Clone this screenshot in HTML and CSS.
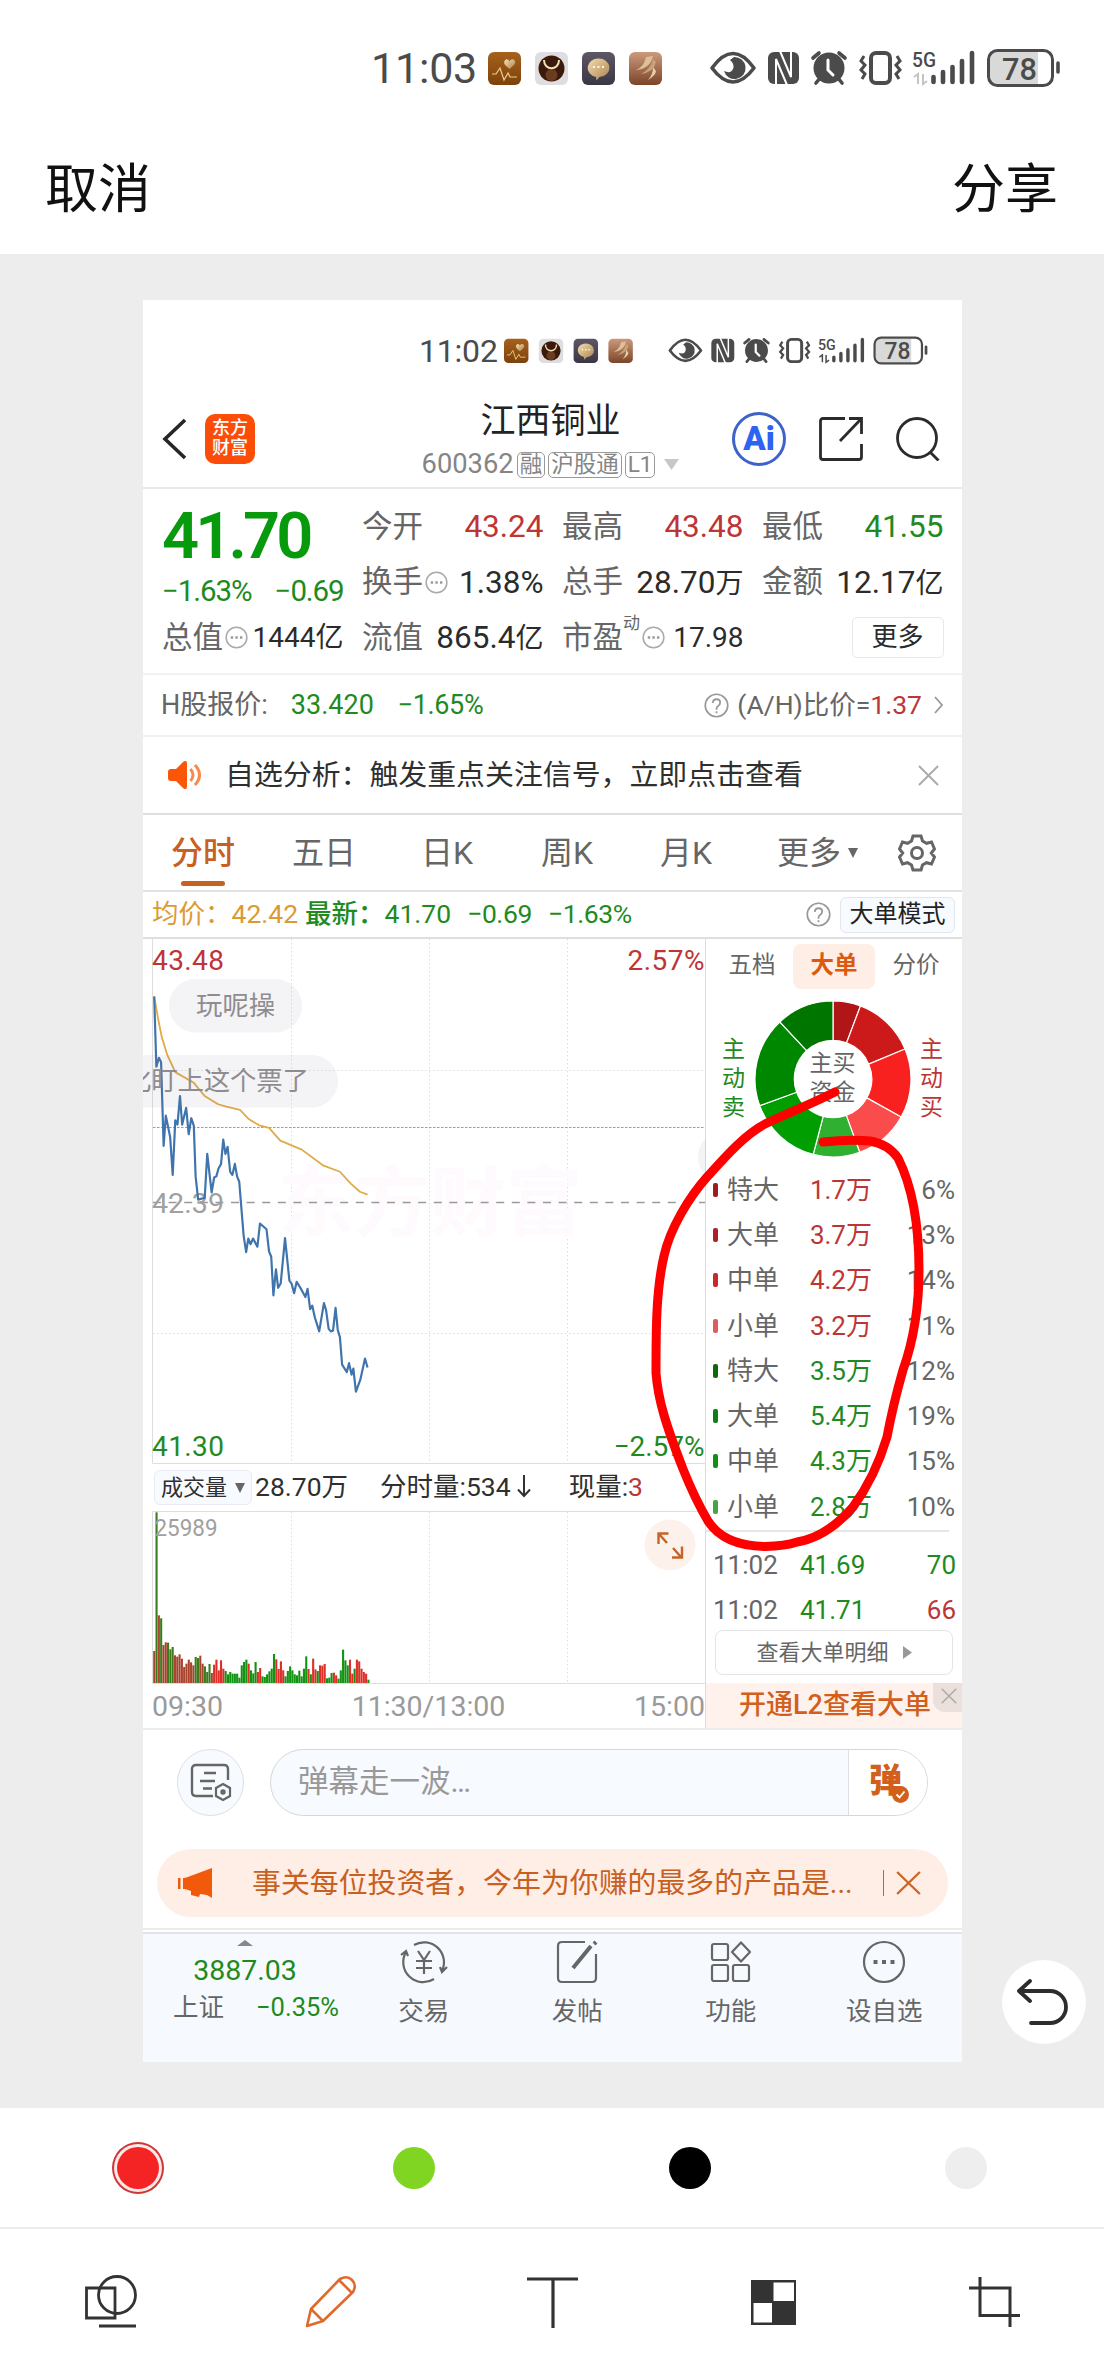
FILE: index.html
```html
<!DOCTYPE html>
<html lang="zh-CN">
<head>
<meta charset="utf-8">
<title>江西铜业</title>
<link rel="stylesheet" href="styles.css">
</head>
<body>
<svg class="defs" width="0" height="0">
  <defs>
    <linearGradient id="gBrown" x1="0" y1="0" x2="0" y2="1"><stop offset="0" stop-color="#a7611b"/><stop offset="1" stop-color="#7c420c"/></linearGradient>
    <linearGradient id="gSlate" x1="0" y1="0" x2="0" y2="1"><stop offset="0" stop-color="#5d5666"/><stop offset="1" stop-color="#3a3745"/></linearGradient>
    <linearGradient id="gRose" x1="0" y1="0" x2="0" y2="1"><stop offset="0" stop-color="#cb9a7c"/><stop offset="1" stop-color="#7b4428"/></linearGradient>
    <linearGradient id="gGold" x1="0" y1="0" x2="1" y2="1"><stop offset="0" stop-color="#f4ddb0"/><stop offset="1" stop-color="#a98150"/></linearGradient>
    <symbol id="status-icons" viewBox="488 46 574 44">
      <rect x="488" y="52" width="33" height="33" rx="6" fill="url(#gBrown)"/>
      <path d="M492 74h4l4-6 4 12 4-7 2 4h7" fill="none" stroke="#f0cf8e" stroke-width="1.200"/>
      <path d="M509.500 69c-5-4-6-5.500-5-8 1.500-2.500 4-2 5 .5 1-2.500 4-3 5.500-.5 1 2.500-.5 4-5.500 8z" fill="url(#gGold)"/>
      <rect x="535" y="52" width="33" height="33" rx="6" fill="#dfdde0"/>
      <circle cx="551.500" cy="68.500" r="13" fill="#3b1a0c"/><circle cx="551.500" cy="75" r="6" fill="#6a3c20"/>
      <path d="M544 60c0 11 15 11 15 0" fill="none" stroke="#f2dfb4" stroke-width="2"/>
      <rect x="582" y="52" width="33" height="33" rx="6" fill="url(#gSlate)"/>
      <path d="M598.500 58.500a10.500 9.300 0 0 1 1 18.600l-3 3.400-.5-3.600a10.500 9.300 0 0 1 2.500-18.400z" fill="url(#gGold)"/>
      <path d="M593 67h2m2.500 0h2m2.500 0h2" stroke="#fff6dd" stroke-width="2"/>
      <rect x="629" y="52" width="33" height="33" rx="6" fill="url(#gRose)"/>
      <path d="M636 70q8-3 10-13l7-1q-3 13-17 14z" fill="#dfc096"/><path d="M641 74q10-5 12-15l3 3q-2 10-15 12z" fill="#c9a377"/><path d="M648 80q5-5 5-13l3 4q0 4-8 9z" fill="#e6cfa8"/>
      <g fill="none" stroke="#4b4b4b">
        <path d="M712 68q21-29 42 0q-21 28-42 0z" stroke-width="3.600" stroke-linejoin="round"/>
        <path d="M734 57a11 11 0 1 1-10 14q7 3 9-2t-3-9z" fill="#4b4b4b" stroke="none"/>
        <rect x="768" y="52" width="31" height="32" rx="6" fill="#4b4b4b" stroke="none"/>
        <path d="M776 85V59l11 26M791 51v26l-11-26" stroke="#fff" stroke-width="2"/>
        <circle cx="829" cy="68" r="15.500" fill="#4b4b4b" stroke="none"/>
        <path d="M813 58l6-5M839 53l6 5M820 78l-4 5M838 78l4 5" stroke-width="3.600" stroke-linecap="round"/>
        <path d="M828 60v10l5 5" stroke="#fff" stroke-width="3" stroke-linecap="round"/>
        <rect x="871" y="53" width="19" height="30" rx="5" stroke-width="4"/>
        <path d="M864 56l-3 5 4 4-4 5 4 4-3 5M897 56l3 5-4 4 4 5-4 4 3 5" stroke-width="3"/>
        <path d="M933.500 77v5M943 72v10M952.500 67v15M962 61v21M972 53v29" stroke-width="4.600" stroke-linecap="round"/>
        <path d="M914 77l4-3v10M927 81l-4 3V74" stroke="var(--traffic)" stroke-width="2"/>
        <path d="M990 60q0-8 8-8h40v32h-40q-8 0-8-8z" fill="#d9d9d9" stroke="none"/>
        <rect x="988.500" y="50.500" width="64" height="35" rx="9" stroke-width="3"/>
        <path d="M1058 63v9" stroke-width="3.600" stroke-linecap="round"/>
      </g>
      <text x="912" y="67" font-size="21" font-weight="500" textLength="24" lengthAdjust="spacingAndGlyphs" fill="#4b4b4b">5G</text>
      <text x="1002" y="79.500" font-size="32" font-weight="500" textLength="35" lengthAdjust="spacingAndGlyphs" fill="#4b4b4b">78</text>
    </symbol>
    <symbol id="dots" viewBox="0 0 24 24"><circle cx="12" cy="12" r="10.800" fill="none" stroke="#aaa" stroke-width="1.600"/><path d="M6 12h2.500m2.300 0h2.500m2.300 0h2.500" stroke="#999" stroke-width="2.400"/></symbol>
    <symbol id="help" viewBox="0 0 24 24"><circle cx="12" cy="12" r="10.800" fill="none" stroke="#999" stroke-width="1.600"/><path d="M8.500 9.500q0-3.500 3.500-3.500t3.500 3.200q0 2-1.700 3T12 15v1M12 17.500v2" fill="none" stroke="#999" stroke-width="1.700"/></symbol>
    <symbol id="cross" viewBox="0 0 22 22"><path d="M1 1l20 20M21 1L1 21" fill="none" stroke="currentColor" stroke-width="2"/></symbol>
  </defs>
</svg>
<div class="app">
  <header class="top">
    <div class="status outer"><span class="clock">11:03</span><svg class="sicons"><use href="#status-icons"/></svg></div>
    <div class="actions"><span>取消</span><span>分享</span></div>
  </header>

  <main class="stage">
    <div class="shot">
      <div class="status inner"><span class="clock">11:02</span><svg class="sicons"><use href="#status-icons"/></svg></div>

      <div class="title-bar">
        <div class="side left">
          <svg width="26" height="42" viewBox="0 0 26 42"><path d="M23 2L3 21l20 19" fill="none" stroke="#262626" stroke-width="3.600"/></svg>
          <div class="logo">东方<br>财富</div>
        </div>
        <div class="name">
          <h1>江西铜业</h1>
          <div class="code"><span class="num">600362</span><i>融</i><i>沪股通</i><i>L1</i><svg width="15" height="11"><path d="M0 0h15l-7.500 11z" fill="#c8c8c8"/></svg></div>
        </div>
        <div class="side right">
          <div class="ai"><b>Ai</b></div>
          <svg width="44" height="44" viewBox="0 0 44 44" fill="none" stroke="#2b2b2b" stroke-width="2.800"><path d="M26 1.500H4q-2.500 0-2.500 2.500v36q0 2.500 2.500 2.500h36q2.500 0 2.500-2.500V27M30 1.500h12.500V17M42 2L21 24"/></svg>
          <svg width="44" height="44" viewBox="0 0 44 44" fill="none" stroke="#2b2b2b" stroke-width="2.800"><circle cx="21" cy="21" r="19.500"/><path d="M34 35l8.500 8.500"/></svg>
        </div>
      </div>

      <section class="quote">
        <div class="last"><div class="big">41.70</div><div class="chg"><span>−1.63%</span><span>−0.69</span></div></div>
        <div class="cell"><label>今开</label><b class="red">43.24</b></div>
        <div class="cell"><label>最高</label><b class="red">43.48</b></div>
        <div class="cell"><label>最低</label><b class="green">41.55</b></div>
        <div class="cell"><label>换手</label><svg class="ic"><use href="#dots"/></svg><b>1.38%</b></div>
        <div class="cell"><label>总手</label><b>28.70<em>万</em></b></div>
        <div class="cell"><label>金额</label><b>12.17<em>亿</em></b></div>
        <div class="cell tight"><label>总值</label><svg class="ic"><use href="#dots"/></svg><b>1444<em>亿</em></b></div>
        <div class="cell"><label>流值</label><b>865.4<em>亿</em></b></div>
        <div class="cell tight"><label>市盈</label><sup>动</sup><svg class="ic"><use href="#dots"/></svg><b>17.98</b></div>
        <div class="cell end"><span class="more">更多</span></div>
      </section>

      <section class="hshare">
        <label>H股报价:</label><span class="green q1">33.420</span><span class="green q2">−1.65%</span>
        <span class="ratio"><svg width="25" height="25"><use href="#help"/></svg><label>(A/H)比价=</label><span class="red">1.37</span><svg width="10" height="18" viewBox="0 0 10 18"><path d="M1 1l7 8-7 8" fill="none" stroke="#999" stroke-width="1.800"/></svg></span>
      </section>

      <section class="notice">
        <svg width="34" height="28" viewBox="0 0 34 28"><path d="M0 11q0-3 3-3h5l7-7q4-3 4 2v22q0 5-4 2l-7-7H3q-3 0-3-3z" fill="#fb5607"/><path d="M22.500 8q5 6 0 12M27 4q9 10 0 20" fill="none" stroke="#f98a4d" stroke-width="3"/></svg>
        <p>自选分析：触发重点关注信号，立即点击查看</p>
        <svg class="x" width="21" height="21"><use href="#cross"/></svg>
      </section>

      <nav class="tabs">
        <span class="on">分时</span><span>五日</span><span>日K</span><span>周K</span><span>月K</span>
        <span class="drop">更多<svg width="10" height="10"><path d="M0 0h10L5 10z" fill="#666"/></svg></span>
        <svg class="gear" width="38" height="38" viewBox="0 0 38 38" fill="none" stroke="#666" stroke-width="3"><path d="M15 2h8l1.500 5 4 2.300 5-1.300 3 7-3.200 4 3.200 4-3 7-5-1.300-4 2.300L23 36h-8l-1.500-5-4-2.300-5 1.300-3-7 3.200-4-3.200-4 3-7 5 1.300 4-2.300z"/><circle cx="19" cy="19" r="5.500"/></svg>
      </nav>

      <section class="legend">
        <span class="amber">均价：</span><span class="amber">42.42</span><span class="green newest">最新：</span><span class="green">41.70</span><span class="green delta">−0.69</span><span class="green delta">−1.63%</span>
        <svg width="25" height="25"><use href="#help"/></svg><span class="mode">大单模式</span>
      </section>

      <section class="market">
        <div class="charts">
          <svg class="price" width="563" height="525" viewBox="143 939 563 525">
            <g fill="none" stroke="#dedede"><path d="M152.500 939V1463.500H706"/><path d="M291.500 939v525M429.500 939v525M567.500 939v525M153 1070.500h552M153 1333.500h552" stroke-dasharray="1.500 2.500"/></g>
            <text x="278" y="1230" font-size="76" font-weight="700" fill="#fefafd">东方财富</text>
            <path d="M153 1130.500h552" stroke="#b9956a" stroke-dasharray="2.500 1.500" transform="translate(0 -3)"/>
            <path d="M153 1202.500h552" stroke="#9a9a9a" stroke-width="1.600" stroke-dasharray="8 7.600"/>
            <text x="152" y="1212.500" font-size="28" textLength="72" lengthAdjust="spacingAndGlyphs" fill="#a0a0a0">42.39</text>
            <g transform="translate(140 930) scale(.3635 .3571)" fill="none" stroke-linejoin="round">
              <path d="M39 186L50 250 60 300 75 350 97 398 148 428 178 465 215 488 235 494 275 504 300 530 330 548 355 554 386 590 445 615 505 660 550 677 580 710 605 733 626 741" stroke="#e0ab48" stroke-width="5"/>
              <path d="M39 186L45 383 52 358 58 370 65 605 71 520 83 580 90 686 97 533 103 545 110 465 116 545 127 498 134 572 141 527 148 548 153 690 160 755 178 750 185 627 197 735 204 693 210 690 216 668 223 655 229 587 235 627 241 607 248 677 254 686 261 655 267 690 273 705 285 855 292 902 298 864 304 880 311 864 323 887 330 822 348 838 355 900 361 915 367 1023 374 950 380 1002 387 990 399 863 411 982 417 990 424 1017 431 985 443 1005 455 1028 461 1005 468 1062 474 1052 481 1085 493 1124 506 1045 512 1065 519 1117 525 1124 531 1122 538 1058 544 1120 550 1140 556 1217 569 1238 575 1213 582 1245 587 1228 594 1293 606 1260 619 1200 626 1225" stroke="#3f74ac" stroke-width="6"/>
            </g>
            <g fill="#8a7590" fill-opacity=".09"><rect x="169" y="979" width="133" height="53.500" rx="26.700"/><rect x="100" y="1055" width="238" height="52.500" rx="26.200"/><rect x="698" y="1131" width="60" height="52" rx="26"/></g>
            <g font-size="26.400" fill="#8f8c90"><text x="196" y="1015">玩呢操</text><text x="125" y="1090" textLength="184">化盯上这个票了</text></g>
            <g font-size="28" lengthAdjust="spacingAndGlyphs"><text x="152" y="969.500" textLength="72" fill="#bd3535">43.48</text><text x="704.500" y="969.500" text-anchor="end" textLength="77" fill="#bd3535">2.57%</text><text x="152" y="1455.500" textLength="72" fill="#1f8a22">41.30</text><text x="704.500" y="1455.500" text-anchor="end" textLength="91" fill="#1f8a22">−2.57%</text></g>
          </svg>
          <div class="volinfo"><span class="pick">成交量<svg width="10" height="10"><path d="M0 0h10L5 10z" fill="#666"/></svg></span><span class="v1">28.70万</span><span class="v2">分时量:534<svg width="16" height="24" viewBox="0 0 16 24"><path d="M8 1v21M2 15.500l6 6.500 6-6.500" fill="none" stroke="#333" stroke-width="2"/></svg></span><span class="v3">现量:<span class="red">3</span></span></div>
          <svg class="volume" width="563" height="173" viewBox="143 1511 563 173">
            <g fill="none" stroke="#dedede"><path d="M152.500 1684v-172.500H706M152 1683.500h554"/><path d="M291.500 1512v171M429.500 1512v171M567.500 1512v171" stroke-dasharray="1.500 2.500"/></g>
            <g id="bars"></g>
            <text x="154.500" y="1536" font-size="23.500" textLength="63" lengthAdjust="spacingAndGlyphs" fill="#a0a0a0">25989</text>
            <circle cx="670" cy="1545" r="25.500" fill="#fdf1ec"/>
            <path d="M667 1543l-8-9M658.500 1544v-10.500h10M673 1548l8 9M682 1546.500v11h-10" fill="none" stroke="#c56424" stroke-width="2.400"/>
          </svg>
          <div class="axis"><span>09:30</span><span>11:30/13:00</span><span>15:00</span></div>
        </div>

        <aside class="orders">
          <div class="otabs"><span>五档</span><span class="on">大单</span><span>分价</span></div>
          <div class="pie">
            <span class="green">主<br>动<br>卖</span>
            <div class="ring"><svg id="ring" width="158" height="158" viewBox="-79 -79 158 158"></svg><span>主买<br>资金</span></div>
            <span class="red">主<br>动<br>买</span>
          </div>
          <ul class="list">
            <li><i class="c1"></i><span>特大</span><b class="red">1.7万</b><em>6%</em></li>
            <li><i class="c2"></i><span>大单</span><b class="red">3.7万</b><em>13%</em></li>
            <li><i class="c3"></i><span>中单</span><b class="red">4.2万</b><em>14%</em></li>
            <li><i class="c4"></i><span>小单</span><b class="red">3.2万</b><em>11%</em></li>
            <li><i class="c5"></i><span>特大</span><b class="green">3.5万</b><em>12%</em></li>
            <li><i class="c6"></i><span>大单</span><b class="green">5.4万</b><em>19%</em></li>
            <li><i class="c7"></i><span>中单</span><b class="green">4.3万</b><em>15%</em></li>
            <li><i class="c8"></i><span>小单</span><b class="green">2.8万</b><em>10%</em></li>
          </ul>
          <div class="trades">
            <div><span>11:02</span><b class="green">41.69</b><em class="green">70</em></div>
            <div><span>11:02</span><b class="green">41.71</b><em class="red">66</em></div>
          </div>
          <div class="detail">查看大单明细<svg width="9" height="13"><path d="M0 0l9 6.500L0 13z" fill="#999"/></svg></div>
          <div class="unlock">开通L2查看大单<span class="shut"><svg width="16" height="16"><use href="#cross"/></svg></span></div>
        </aside>
      </section>

      <section class="comment">
        <span class="round"><svg width="42" height="40" viewBox="0 0 42 40" fill="none" stroke="#666" stroke-width="2.400"><path d="M38 17V6q0-4-4-4H6Q2 2 2 6v23q0 4 4 4h17M14 10h12M10 18h15M13 25.500h9"/><path d="M33 21l7 4v8l-7 4-7-4v-8z" stroke-width="2.200"/><circle cx="33" cy="29" r="1.500"/></svg></span>
        <div class="field"><span>弹幕走一波…</span><div class="dan">弹<svg width="17" height="17" viewBox="0 0 17 17"><circle cx="8.500" cy="8.500" r="8.500" fill="#d2601c"/><path d="M4.500 8.500l3 3 5-6" fill="none" stroke="#fff" stroke-width="1.800"/></svg></div></div>
      </section>

      <section class="promo">
        <svg width="35" height="30" viewBox="0 0 35 30"><path d="M0 10h2.500v11H0zM5 10h2v11H5zM7 10L34 0v30l-5-3-7-1-1 3-8-2v-4l-6-2z" fill="#f05a0a"/></svg>
        <p>事关每位投资者，今年为你赚的最多的产品是...</p><i></i>
        <svg class="px" width="25" height="24" viewBox="0 0 22 22" preserveAspectRatio="none"><path d="M1 1l20 20M21 1L1 21" fill="none" stroke="#cb6425" stroke-width="2"/></svg>
      </section>

      <nav class="bottom">
        <div class="index"><svg width="16" height="6"><path d="M0 6h16L8 0z" fill="#888"/></svg><b class="green">3887.03</b><div><span>上证</span><span class="green">−0.35%</span></div></div>
        <div class="item"><svg width="48" height="44" viewBox="0 0 48 44" fill="none" stroke="#666" stroke-width="2.200"><path d="M14 5a20 20 0 0 1 28 26M34 39A20 20 0 0 1 6 12M1 15l5-4 2 5M47 27l-5 5-2-5"/><path d="M18 11l6 9 6-9M16 21h16M16 28h16M24 20v14"/></svg><span>交易</span></div>
        <div class="item"><svg width="44" height="44" viewBox="0 0 44 44" fill="none" stroke="#666" stroke-width="2.200"><path d="M30 2H7Q3 2 3 6v32q0 4 4 4h30q4 0 4-4V14"/><path d="M18 28L36 6M39 4l2-2" stroke-width="4"/></svg><span>发帖</span></div>
        <div class="item"><svg width="42" height="44" viewBox="0 0 42 44" fill="none" stroke="#666" stroke-width="2.200"><rect x="2" y="4" width="16" height="16" rx="2"/><rect x="2" y="25" width="16" height="16" rx="2"/><rect x="23" y="25" width="16" height="16" rx="2"/><path d="M31 2.500l9 9.500-9 9.500-9-9.500z" stroke-linejoin="round"/></svg><span>功能</span></div>
        <div class="item"><svg width="44" height="44" viewBox="0 0 44 44" fill="none" stroke="#666" stroke-width="2.200"><circle cx="22" cy="22" r="20"/><path d="M11.500 22h4m4.500 0h4m4.500 0h4" stroke-width="3.800"/></svg><span>设自选</span></div>
      </nav>
    </div>

    <svg class="stroke" width="1104" height="1854" viewBox="0 254 1104 1854"><path d="M835 1092C805 1107 785 1114 767 1123C745 1134 725 1157 707 1177C690 1196 670 1228 664 1256C656 1290 656 1330 656 1373C658 1400 666 1425 683 1469Q695 1499 708 1521C717 1535 735 1546 765 1546.500Q785 1546 797 1542Q827 1537 853 1507Q875 1477 887 1437Q893 1405 903 1370Q919 1325 919 1270Q919 1200 898 1158Q888 1144 870 1141Q850 1139 823 1142" fill="none" stroke="#fe0000" stroke-width="9" stroke-linecap="round" stroke-linejoin="round"/></svg>
    <div class="undo"><svg width="54" height="46" viewBox="0 0 54 46" fill="none" stroke="#2d2d2d" stroke-width="3.800" stroke-linecap="round" stroke-linejoin="round"><path d="M13 2L2 12l11 10M2 12h31a16 16 0 0 1 0 32H14"/></svg></div>
  </main>

  <footer>
    <div class="colors"><span class="dot r"></span><span class="dot g"></span><span class="dot k"></span><span class="dot w"></span></div>
    <div class="tools">
      <svg width="54" height="54" viewBox="0 0 54 54" fill="none" stroke="#333" stroke-width="2.800"><path d="M3.500 13h28.500v30H3.500z"/><circle cx="34" cy="20" r="18.500"/><path d="M16 51h37" stroke-width="3.200"/></svg>
      <svg width="54" height="54" viewBox="0 0 54 54" fill="none" stroke="#e06a2b" stroke-width="2.600" stroke-linejoin="round"><path d="M3 51l4-17L36 4q7-4 12 1t1 12L19 46zM7 34l12 12M35 5l13 13"/></svg>
      <svg width="54" height="54" viewBox="0 0 54 54" stroke="#333" stroke-width="3.200"><path d="M2 4h51M28 4v49"/></svg>
      <svg width="54" height="54" viewBox="0 0 54 54"><path d="M5 5h45v45H5z" fill="#333"/><path d="M27.500 7.500H48V26H27.500zM7.500 28H26v19.500H7.500z" fill="#fff"/></svg>
      <svg width="54" height="54" viewBox="0 0 54 54" fill="none" stroke="#333" stroke-width="3"><path d="M2 13h41v39M13 2v38.500h40"/></svg>
    </div>
  </footer>
</div>
<script src="chart.js"></script>
</body>
</html>
```
FILE: styles.css
```css
* { box-sizing: border-box; }
body { margin: 0; background: #fff; font-family: Roboto, "Noto Sans CJK SC", sans-serif; line-height: 1; color: #666; }
svg { display: block; flex: none; overflow: hidden; }
.defs { position: absolute; }
h1, p, ul { margin: 0; padding: 0; font-weight: 400; }
em, i { font-style: normal; }
b { font-weight: 400; }
span, label, b, em { white-space: nowrap; }
.red { color: #bd3535; }
.green { color: #1f8a22; }
.amber { color: #dc9a35; }
.app { width: 1104px; height: 2376px; display: flex; flex-direction: column; overflow: hidden; }

.top { height: 254px; background: #fff; padding-top: 46px; }
.status { display: flex; align-items: center; color: #4b4b4b; }
.outer { height: 44px; margin: 0 42px 0 371px; justify-content: space-between; --traffic: #c4c4c4; }
.outer .clock { font-size: 43px; letter-spacing: -.2px; }
.outer .sicons { width: 574px; height: 44px; }
.actions { display: flex; justify-content: space-between; padding: 0 46px 0 45px; margin-top: 74px; font-size: 53px; color: #111; }

.stage { position: relative; height: 1854px; background: #ededed; padding: 46px 0 0 143px; }
.shot { width: 819px; height: 1762px; background: #fff; display: flex; flex-direction: column; overflow: hidden; }
.shot > * { flex: none; }
.inner { height: 33px; margin: 34px 33px 0 276px; justify-content: space-between; --traffic: #4b4b4b; }
.inner .clock { font-size: 32px; letter-spacing: -.2px; }
.inner .sicons { width: 425px; height: 33px; }

.title-bar { height: 122px; padding: 23px 22px 0 19px; display: flex; justify-content: space-between; border-bottom: 2px solid #e9e9ea; }
.side { display: flex; align-items: center; height: 97px; width: 220px; }
.left { gap: 17px; }
.right { gap: 33px; justify-content: flex-end; }
.logo { width: 50px; height: 50px; border-radius: 10px; background: #fb4d08; color: #fff; font-size: 18px; font-weight: 500; line-height: 20px; padding: 4px 0 0 7px; }
.name { flex: 1; display: flex; flex-direction: column; align-items: center; gap: 11px; margin-top: 14px; padding-right: 1px; }
h1 { font-size: 35px; color: #222; line-height: 36px; }
.code { display: flex; align-items: center; gap: 3px; font-size: 27.300px; color: #858585; }
.code i { border: 1.500px solid #999; border-radius: 5px; height: 26px; line-height: 22px; font-size: 22.500px; padding: 0 2px; white-space: nowrap; }
.code svg { margin-left: 6px; }
.ai { width: 54px; height: 54px; border: 3px solid #3d63c8; border-radius: 50%; display: flex; justify-content: center; color: #2f62f0; }
.ai b { font-weight: 900; font-size: 33px; line-height: 48px; }

.quote { display: grid; grid-template-columns: repeat(4, 181.500px); grid-template-rows: repeat(3, 55.500px); column-gap: 18.500px; height: 186px; padding: 10px 18px 0 19px; border-bottom: 2px solid #f2f2f2; }
.last { grid-row: span 2; }
.big { color: #079a0c; font-size: 65px; font-weight: 600; letter-spacing: -3.900px; margin-top: 5px; white-space: nowrap; }
.chg { display: flex; justify-content: space-between; color: #1f8a22; font-size: 29.500px; margin-top: 8px; letter-spacing: -1.100px; }
.cell { display: flex; align-items: center; font-size: 30.500px; color: #666; }
.cell b { margin-left: auto; color: #2b2b2b; font-size: 31.500px; }
.cell em { font-size: 28px; }
.cell b.red { color: #bd3535; }
.cell b.green { color: #1f8a22; }
.cell .ic { width: 23px; height: 23px; margin-left: 2px; }
.cell sup { font-size: 17px; align-self: flex-start; margin-top: 5px; line-height: 1; }
.tight b { font-size: 28px; }
.cell.end { justify-content: flex-end; }
.more { border: 1.500px solid #e8e8ea; border-radius: 5px; width: 92px; height: 41px; line-height: 38px; text-align: center; font-size: 26px; color: #2b2b2b; }

.hshare { height: 62px; display: flex; align-items: center; padding: 0 18px; font-size: 27px; border-bottom: 2px solid #f2f2f2; }
.hshare .q1 { margin-left: 23px; }
.hshare .q2 { margin-left: 24px; letter-spacing: -.4px; }
.ratio { margin-left: auto; display: flex; align-items: center; font-size: 26.500px; }
.ratio label { margin: 0 0 0 8px; }
.ratio svg:last-child { margin-left: 12px; }

.notice { height: 78px; display: flex; align-items: center; padding: 0 23px 0 25px; border-bottom: 2px solid #dedede; }
.notice p { font-size: 28.900px; color: #2f2f2f; margin-left: 23px; white-space: nowrap; }
.notice .x { margin-left: auto; color: #aaa; }

.tabs { height: 77px; display: grid; grid-template-columns: 121px 129px 120px 119px 117px 121px 38px; align-items: center; padding-left: 28px; font-size: 32px; border-bottom: 2px solid #e2e2e2; }
.tabs .on { color: #c8601f; font-weight: 500; position: relative; width: 64px; }
.tabs .on::after { content: ""; position: absolute; left: 10px; right: 10px; bottom: -17px; height: 5px; border-radius: 3px; background: #c8601f; }
.drop { display: flex; align-items: center; gap: 7px; }

.legend { height: 47px; display: flex; align-items: center; font-size: 26.500px; padding: 0 7px 0 9px; border-bottom: 2px solid #dedede; }
.legend .newest { margin-left: 7px; font-weight: 500; }
.legend .delta { margin-left: 16px; letter-spacing: -.4px; }
.legend > svg { margin-left: auto; }
.mode { margin-left: 9px; width: 115px; height: 36px; border: 1.500px solid #e2e6ee; border-radius: 6px; background: #f7faff; color: #222; font-size: 24px; line-height: 32px; text-align: center; }

.market { height: 791px; display: flex; border-bottom: 2px solid #ececec; }
.charts { width: 563px; border-right: 1.500px solid #dcdcdf; }
.volinfo { height: 47px; display: flex; align-items: center; padding-left: 11px; font-size: 26.500px; color: #2f2f2f; }
.pick { display: flex; align-items: center; justify-content: space-between; width: 98px; height: 35px; border: 1.500px solid #e8ebf3; border-radius: 6px; background: #f7faff; font-size: 22px; padding: 0 6px; margin-right: 3px; }
.v2 { display: flex; margin-left: 32px; }
.v2 svg { margin-left: 5px; }
.v3 { margin-left: 37px; }
.axis { height: 45px; display: flex; justify-content: space-between; align-items: center; font-size: 28.500px; color: #9a9a9a; padding: 1px 0 0 9px; }

.orders { width: 256px; display: flex; flex-direction: column; }
.otabs { height: 53px; padding: 1px 6px 0 5px; display: grid; grid-template-columns: repeat(3, 82px); align-items: center; text-align: center; font-size: 23.500px; }
.otabs .on { background: #ffeee6; color: #dc5a10; font-weight: 700; border-radius: 8px; height: 45px; line-height: 43px; }
.pie { display: flex; justify-content: space-between; align-items: center; height: 173px; padding: 0 19px 0 16px; font-size: 23px; line-height: 29px; }
.ring { position: relative; width: 158px; height: 158px; }
.ring span { position: absolute; inset: 49px 0 0; text-align: center; line-height: 29px; }
.list { list-style: none; padding-top: 2px; height: 367px; margin-right: 13px; border-bottom: 2px solid #e6e6e6; }
.list li { display: grid; grid-template-columns: 14px 82px 63px 1fr; align-items: center; height: 45.300px; padding-left: 7px; font-size: 26px; margin-right: -6px; }
.list i { width: 5px; height: 14px; border-radius: 2px; }
.list b, .list em { text-align: right; font-size: 26px; }
.c1 { background: #9c1c20; } .c2 { background: #ab2328; } .c3 { background: #c9282c; } .c4 { background: #dd5d5d; }
.c5 { background: #0a6a0e; } .c6 { background: #107c14; } .c7 { background: #128f14; } .c8 { background: #43a543; }
.trades { padding: 10px 6px 0 7px; font-size: 26px; }
.trades div { display: grid; grid-template-columns: 87px 1fr auto; height: 45px; align-items: center; }
.detail { margin: -2px 9px 0; height: 45px; flex: none; border: 1.500px solid #e4e4e6; border-radius: 8px; display: flex; align-items: center; justify-content: center; gap: 14px; font-size: 22px; }
.unlock { margin-top: auto; height: 45px; background: #fff2ed; color: #d2601c; font-size: 27px; font-weight: 500; line-height: 45px; padding-left: 33px; position: relative; white-space: nowrap; }
.shut { position: absolute; right: 0; top: 0; width: 29px; height: 29px; background: #ece0dd; border-radius: 0 0 0 12px; padding: 5px 0 0 8px; color: #aaa; }

.comment { height: 119px; display: flex; justify-content: space-between; padding: 19px 34px 0; }
.round { width: 67px; height: 67px; border: 1.500px solid #dcdfe4; border-radius: 50%; background: #f7faff; display: flex; align-items: center; justify-content: center; }
.field { width: 658px; height: 67px; border: 1.500px solid #d4d8dd; border-radius: 34px; background: #f7faff; display: flex; align-items: center; justify-content: space-between; padding-left: 27px; font-size: 30.500px; color: #999; overflow: hidden; }
.dan { width: 79px; height: 100%; background: #fff; border-left: 1.500px solid #dcdfe4; color: #d2601c; font-weight: 900; font-size: 33px; line-height: 61px; padding-left: 20px; position: relative; }
.dan svg { position: absolute; left: 43px; top: 36px; }

.promo { height: 68px; margin: 0 14px; border-radius: 34px; background: #ffeee6; display: flex; align-items: center; padding: 0 27px 0 21px; color: #c8601f; }
.promo p { font-size: 28.900px; margin-left: 39px; white-space: nowrap; flex: none; width: 598px; }
.promo i { width: 1px; height: 26px; background: #cb6425; margin-left: auto; }
.px { margin-left: 12px; }

.bottom { margin-top: 11px; flex: 1; border-top: 2px solid #ececec; box-shadow: inset 0 2px #fff, inset 0 4px #e2e4e9; background: #f6faff; display: grid; grid-template-columns: 204px repeat(4, 153.500px); }
.index { display: flex; flex-direction: column; align-items: center; padding-top: 10px; }
.index b { font-size: 28.500px; margin-top: 11px; }
.index div { display: flex; gap: 32px; font-size: 25.500px; margin-top: 9px; margin-left: 22px; }
.item { display: flex; flex-direction: column; align-items: center; gap: 15px; padding-top: 10px; font-size: 25.500px; }

.stroke { position: absolute; left: 0; top: 0; }
.undo { position: absolute; left: 1002px; top: 1706px; width: 84px; height: 84px; border-radius: 50%; background: #fff; display: flex; align-items: center; justify-content: center; }

.colors { height: 121px; display: grid; grid-template-columns: repeat(4, 1fr); place-items: center; border-bottom: 2px solid #ececec; }
.dot { width: 42px; height: 42px; border-radius: 50%; }
.r { background: #f42424; box-shadow: 0 0 0 3px #fbe9e9, 0 0 0 5px #cf3636; }
.g { background: #7fd521; } .k { background: #000; } .w { background: #eee; }
.tools { height: 145px; display: grid; grid-template-columns: repeat(5, 1fr); place-items: center; }
```
FILE: chart.js
```js
const NS = "http://www.w3.org/2000/svg";

function add(parent, name, attrs) {
  const node = document.createElementNS(NS, name);
  for (const key in attrs) node.setAttribute(key, attrs[key]);
  parent.appendChild(node);
}

// Volume per minute: direction and bar height in thirds of a pixel.
const volume = "r96 g512 r203 g194 r114 r122 g121 g101 g108 r83 r79 r86 r73 r48 r58 r70 r62 r53 g78 g75 r82 r58 g50 g33 g57 r30 r55 r70 r38 r68 r43 g36 g26 g33 g28 g28 g28 g16 g53 g63 g70 r58 g38 g29 g63 r33 r45 g20 g18 g26 g35 g43 g87 r71 r42 r65 r38 g20 g36 g50 g38 g26 g23 g37 g20 g43 g80 r42 g26 r73 r41 g36 r53 r52 r57 g14 g16 g30 r31 r23 g13 g38 g100 g68 g53 r70 r28 g43 r70 r65 r43 r33 r28 g10".split(" ");
const bars = document.getElementById("bars");
volume.forEach((v, i) => {
  const h = v.slice(1) / 3;
  add(bars, "rect", { x: 153.2 + i * 2.303, y: 1683 - h, width: 2.1, height: h, fill: v[0] === "r" ? (i < 26 ? "#a8452c" : "#dc2f28") : (i < 26 ? "#3b7d1c" : "#129312") });
});

// Ring segments, clockwise from twelve o'clock.
const angles = [0, 20.6, 67.4, 119.2, 160, 194.7, 250, 317, 360];
const fills = ["#b01518", "#cc1a1a", "#f92020", "#fb4c4c", "#30b030", "#009e00", "#008700", "#007500"];
const ring = document.getElementById("ring");
const at = (r, deg) => {
  const a = deg * Math.PI / 180;
  return (r * Math.sin(a)).toFixed(2) + " " + (-r * Math.cos(a)).toFixed(2);
};
fills.forEach((fill, i) => {
  const a = angles[i], b = angles[i + 1];
  add(ring, "path", { d: `M${at(78, a)}A78 78 0 0 1 ${at(78, b)}L${at(38.7, b)}A38.700 38.700 0 0 0 ${at(38.7, a)}Z`, fill, stroke: "#fff", "stroke-width": 1.2 });
});
```
